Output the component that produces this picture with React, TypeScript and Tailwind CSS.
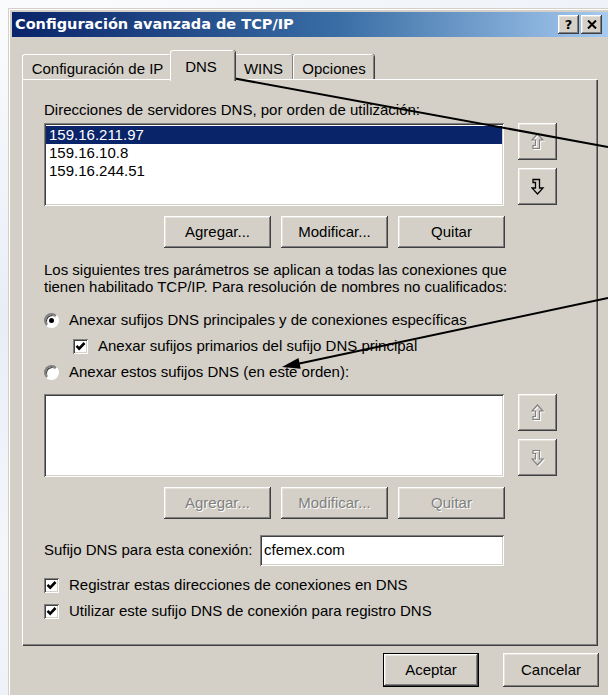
import type { ReactNode } from "react";

const ui = "font-['Liberation_Sans',Arial,sans-serif] text-[15px] text-black";
const raised =
  "bg-[#d4d0c8] shadow-[inset_-1px_-1px_0_#404040,inset_1px_1px_0_#ffffff,inset_-2px_-2px_0_#808080,inset_2px_2px_0_#e6e3dd]";
const sunken =
  "bg-white shadow-[inset_1px_1px_0_#808080,inset_-1px_-1px_0_#ffffff,inset_2px_2px_0_#404040,inset_-2px_-2px_0_#d4d0c8]";
const grayed = "text-[#808080] [text-shadow:1px_1px_0_#ffffff]";

type BtnProps = {
  children: ReactNode;
  className: string;
  disabled?: boolean;
  isDefault?: boolean;
};

function Btn({ children, className, disabled, isDefault }: BtnProps) {
  return (
    <div
      className={`flex items-center justify-center ${raised} ${className} ${
        isDefault ? "border border-black" : ""
      } ${disabled ? grayed : ""}`}
    >
      {children}
    </div>
  );
}

// hollow "move up / move down" arrow used beside the lists
function OrderArrow({ down, disabled }: { down?: boolean; disabled?: boolean }) {
  const d = "M6.5 1 L12 7 H8.5 V15.5 H2 V12.5 H4.5 V7 H1 Z";
  const flip = down ? "translate(0 17) scale(1 -1)" : undefined;
  return (
    <svg width="14" height="18" viewBox="0 0 14 18">
      {disabled ? (
        <>
          <g transform="translate(1 1)">
            <path d={d} transform={flip} fill="none" stroke="#ffffff" strokeWidth="1.2" />
          </g>
          <path d={d} transform={flip} fill="none" stroke="#808080" strokeWidth="1.2" />
        </>
      ) : (
        <path d={d} transform={flip} fill="none" stroke="#000000" strokeWidth="1.3" />
      )}
    </svg>
  );
}

function ArrowPair({ disabled }: { disabled?: boolean }) {
  return (
    <div className="ml-[14px] flex flex-col gap-[8px]">
      <Btn className="h-[37px] w-[39px]">
        <OrderArrow disabled />
      </Btn>
      <Btn className="h-[37px] w-[39px]">
        <OrderArrow down disabled={disabled} />
      </Btn>
    </div>
  );
}

function Check() {
  return (
    <div className={`flex h-[15px] w-[15px] shrink-0 items-center justify-center ${sunken}`}>
      <svg width="11" height="11" viewBox="0 0 11 11">
        <path d="M1.5 4.8 L4.2 7.6 L9.5 2" fill="none" stroke="#000" strokeWidth="2.6" />
      </svg>
    </div>
  );
}

function Radio({ on }: { on?: boolean }) {
  return (
    <div className="flex h-[15px] w-[15px] shrink-0 items-center justify-center rounded-full border-2 border-t-[#808080] border-l-[#808080] border-r-white border-b-white bg-white shadow-[inset_1px_1px_0_#404040]">
      {on ? <div className="h-[5px] w-[5px] rounded-full bg-black" /> : null}
    </div>
  );
}

function Tab({ label, active, className }: { label: string; active?: boolean; className: string }) {
  return (
    <div
      className={`relative flex items-start justify-center rounded-t-[3px] border-t border-l border-white bg-[#d4d0c8] shadow-[inset_-1px_0_0_#808080,1px_0_0_#404040] ${className} ${
        active ? "z-10 -mx-[2px] -mb-[2px] h-[31px] pt-[5px]" : "h-[25px] pt-[3px]"
      }`}
    >
      {label}
    </div>
  );
}

const servers = ["159.16.211.97", "159.16.10.8", "159.16.244.51"];

export default function App() {
  return (
    <div
      className={`relative h-[695px] w-[608px] overflow-hidden bg-[linear-gradient(160deg,#fbfcfd_0%,#e9eef6_35%,#f4f6fa_60%,#e6ebf3_100%)] pt-[8px] pl-[8px] ${ui}`}
    >
      <div className="h-[700px] w-[604px] bg-[#d4d0c8] p-[4px] shadow-[inset_1px_1px_0_#d4d0c8,inset_2px_2px_0_#ffffff]">
        {/* title bar */}
        <div className="flex h-[25px] items-center bg-[linear-gradient(90deg,#0a246a_0%,#3a6ea5_55%,#a6caf0_100%)] pr-[6px] pl-[3px]">
          <span className="font-['DejaVu_Sans',Verdana,sans-serif] text-[14.5px] font-bold text-white">
            Configuración avanzada de TCP/IP
          </span>
          <div className="ml-auto flex gap-[2px]">
            <Btn className="h-[19px] w-[21px]">
              <span className="font-['DejaVu_Sans',sans-serif] text-[13px] leading-none font-bold">?</span>
            </Btn>
            <Btn className="h-[19px] w-[21px]">
              <svg width="10" height="9" viewBox="0 0 10 9">
                <path d="M1 0.5 L9 8.5 M9 0.5 L1 8.5" stroke="#000" strokeWidth="2" />
              </svg>
            </Btn>
          </div>
        </div>

        {/* client area */}
        <div className="pt-[13px] pl-[10px]">
          <div className="flex h-[29px] items-end">
            <Tab label="Configuración de IP" className="w-[150px]" />
            <Tab label="DNS" active className="w-[65px] pr-[4px]" />
            <Tab label="WINS" className="w-[60px]" />
            <Tab label="Opciones" className="w-[81px]" />
          </div>

          <div className="h-[566px] w-[575px] border-t border-l border-white bg-[#d4d0c8] pl-[21px] shadow-[inset_-1px_-1px_0_#808080,1px_1px_0_#404040]">
            <div className="mt-[21px] leading-[18px]">Direcciones de servidores DNS, por orden de utilización:</div>

            <div className="mt-[4px] flex">
              <div className={`h-[83px] w-[460px] px-[2px] pt-[3px] ${sunken}`}>
                {servers.map((ip, i) => (
                  <div
                    key={ip}
                    className={`h-[18px] pl-[3px] leading-[18px] ${i === 0 ? "bg-[#0a246a] text-white" : ""}`}
                  >
                    {ip}
                  </div>
                ))}
              </div>
              <ArrowPair />
            </div>

            <div className="mt-[10px] ml-[120px] flex gap-[10px]">
              <Btn className="h-[32px] w-[107px]">Agregar...</Btn>
              <Btn className="h-[32px] w-[107px]">Modificar...</Btn>
              <Btn className="h-[32px] w-[107px]">Quitar</Btn>
            </div>

            <p className="mt-[13px] leading-[17px]">
              Los siguientes tres parámetros se aplican a todas las conexiones que
              <br />
              tienen habilitado TCP/IP. Para resolución de nombres no cualificados:
            </p>

            <div className="mt-[16px] flex h-[18px] items-center gap-[10px]">
              <Radio on />
              <span>Anexar sufijos DNS principales y de conexiones específicas</span>
            </div>
            <div className="mt-[8px] flex h-[18px] items-center gap-[10px] pl-[29px]">
              <Check />
              <span>Anexar sufijos primarios del sufijo DNS principal</span>
            </div>
            <div className="mt-[8px] flex h-[18px] items-center gap-[10px]">
              <Radio />
              <span>Anexar estos sufijos DNS (en este orden):</span>
            </div>

            <div className="mt-[13px] flex">
              <div className={`h-[83px] w-[460px] ${sunken}`} />
              <ArrowPair disabled />
            </div>

            <div className="mt-[10px] ml-[120px] flex gap-[10px]">
              <Btn disabled className="h-[32px] w-[107px]">Agregar...</Btn>
              <Btn disabled className="h-[32px] w-[107px]">Modificar...</Btn>
              <Btn disabled className="h-[32px] w-[107px]">Quitar</Btn>
            </div>

            <div className="mt-[16px] flex items-center">
              <span className="w-[216px]">Sufijo DNS para esta conexión:</span>
              <div className={`flex h-[31px] w-[244px] items-center pl-[4px] ${sunken}`}>cfemex.com</div>
            </div>

            <div className="mt-[10px] flex h-[18px] items-center gap-[10px]">
              <Check />
              <span>Registrar estas direcciones de conexiones en DNS</span>
            </div>
            <div className="mt-[8px] flex h-[18px] items-center gap-[10px]">
              <Check />
              <span>Utilizar este sufijo DNS de conexión para registro DNS</span>
            </div>
          </div>

          <div className="mt-[8px] flex justify-end gap-[24px] pr-[9px]">
            <Btn isDefault className="h-[34px] w-[96px]">Aceptar</Btn>
            <Btn className="h-[34px] w-[96px]">Cancelar</Btn>
          </div>
        </div>
      </div>

      {/* callout arrows drawn over the dialog */}
      <svg className="pointer-events-none absolute inset-0" width="608" height="695" viewBox="0 0 608 695">
        <line x1="608" y1="147" x2="205" y2="73" stroke="#000" strokeWidth="2" />
        <polygon points="190,70 208.7,67.9 206.7,78.7" fill="#000" />
        <line x1="608" y1="298" x2="297" y2="364" stroke="#000" strokeWidth="2" />
        <polygon points="282,367 300.7,368.7 298.5,357.9" fill="#000" />
      </svg>
    </div>
  );
}
